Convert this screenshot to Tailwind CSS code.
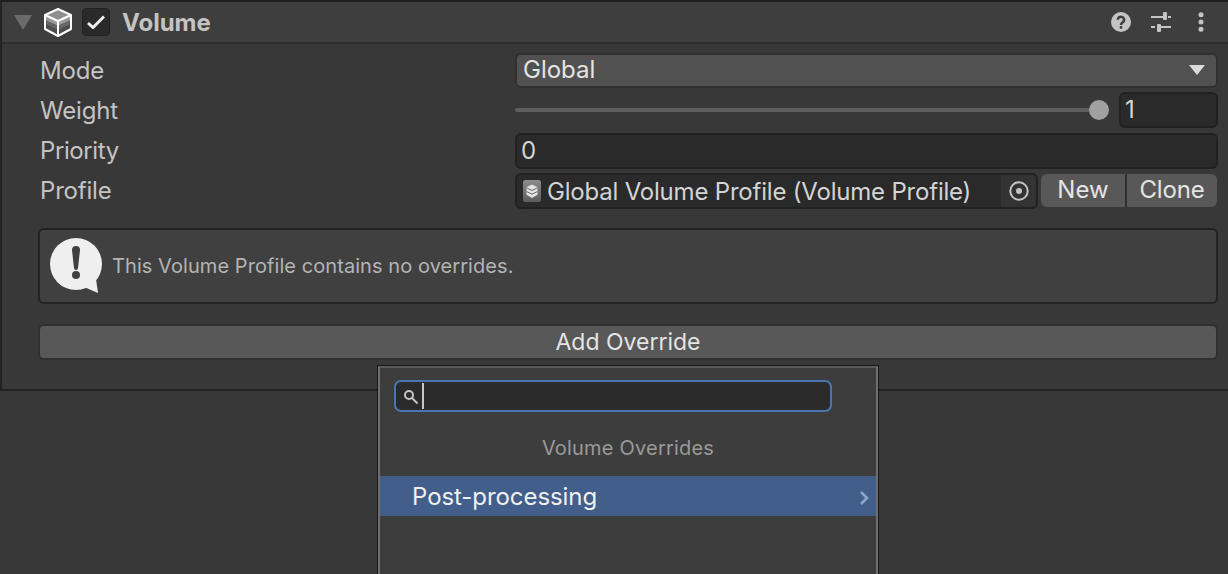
<!DOCTYPE html>
<html lang="en">
<head>
  <meta charset="UTF-8" />
  <title>Volume Inspector</title>
  <script src="https://cdn.jsdelivr.net/npm/@tailwindcss/browser@4"></script>
</head>
<body class="relative w-[1228px] h-[574px] overflow-hidden bg-[#383838] font-['Inter',sans-serif] text-[24px] leading-none text-[#c4c4c4]">

  <!-- Component -->
  <section class="h-[391px] border-l-2 border-b-2 border-t-2 border-[#232323] border-t-[#1f1f1f]">
    <!-- Header -->
    <header class="h-[42px] flex items-center bg-[#3e3e3e] border-b-2 border-[#2f2f2f] pl-[12px] pr-[24px]">
      <svg width="18" height="15" viewBox="0 0 18 15" class="shrink-0"><path d="M0 0h18L9 15z" fill="#6b6b6b"/></svg>
      <svg width="30" height="30" viewBox="0 0 30 30" class="ml-[11px] shrink-0">
        <path d="M15 2l13 6-13 6L2 8z" fill="#8e8e8e"/>
        <path d="M2 8l13 6 13-6v5l-13 6-13-6z" fill="#9a9a9a"/>
        <path d="M2 13l13 6 13-6v4l-13 6-13-6z" fill="#666666"/>
        <path d="M2 17l13 6 13-6v5l-13 7-13-7z" fill="#4d4d4d"/>
        <path d="M15 2l13 6v14l-13 7-13-7V8zM2 8l13 6 13-6M15 14v15" fill="none" stroke="#fff" stroke-width="2" stroke-linejoin="round"/>
      </svg>
      <div class="ml-[9px] w-[28px] h-[28px] shrink-0 rounded-[4px] bg-[#2a2a2a] border border-[#212121] flex items-center justify-center">
        <svg width="18" height="14" viewBox="0 0 18 14"><path d="M1 8l5 4.500L17 1.500" fill="none" stroke="#eee" stroke-width="3"/></svg>
      </div>
      <span class="ml-[12px] pt-[2px] font-bold text-[#c4c4c4]">Volume</span>
      <div class="ml-auto flex items-center">
        <svg width="20" height="20" viewBox="0 0 22 22">
          <circle cx="11" cy="11" r="11" fill="#c4c4c4"/>
          <path d="M7.500 8.500a3.500 3.300 0 1 1 5.500 2.700c-1.300.9-2 1.300-2 3" fill="none" stroke="#3e3e3e" stroke-width="2.800"/>
          <rect x="9.600" y="15.500" width="2.800" height="2.800" fill="#3e3e3e"/>
        </svg>
        <svg width="20" height="20" viewBox="0 0 20 20" class="ml-[20px]" fill="#c4c4c4">
          <rect x="0" y="4" width="12" height="2"/><rect x="12" y="0" width="4" height="8" rx="1"/><rect x="17" y="4" width="3" height="2"/>
          <rect x="0" y="14" width="4" height="2"/><rect x="6" y="12" width="4" height="8" rx="1"/><rect x="10" y="14" width="10" height="2"/>
        </svg>
        <svg width="6" height="20" viewBox="0 0 6 20" class="ml-[27px]" fill="#c4c4c4">
          <circle cx="3" cy="2.700" r="2.500"/><circle cx="3" cy="10" r="2.500"/><circle cx="3" cy="17.300" r="2.500"/>
        </svg>
      </div>
    </header>

    <!-- Fields -->
    <div class="pl-[38px] pr-[10px] pt-[7px]">
      <div class="h-[40px] flex items-center">
        <span class="w-[475px] tracking-[-0.2px]">Mode</span>
        <div class="flex-1 h-[35px] mb-[2px] flex items-center justify-between rounded-[6px] bg-[#515151] border-2 border-[#303030] pl-[6px] pr-[11px] text-[#e4e4e4]">
          <span>Global</span>
          <svg width="16" height="10" viewBox="0 0 16 10"><path d="M0 0h16L8 10z" fill="#dcdcdc"/></svg>
        </div>
      </div>
      <div class="h-[40px] flex items-center">
        <span class="w-[475px] tracking-[-0.2px]">Weight</span>
        <div class="flex-1 flex items-center mb-[2px]">
          <div class="relative flex-1 h-[4px] bg-[#5e5e5e] rounded-full mr-[10px]">
            <div class="absolute right-0 top-[-8px] w-[20px] h-[20px] rounded-full bg-[#a0a0a0]"></div>
          </div>
          <div class="w-[99px] h-[36px] flex items-center rounded-[6px] bg-[#2a2a2a] border-2 border-[#212121] pl-[4px] text-[#d4d4d4]">1</div>
        </div>
      </div>
      <div class="h-[40px] flex items-center">
        <span class="w-[475px] tracking-[-0.4px]">Priority</span>
        <div class="flex-1 h-[36px] flex items-center rounded-[6px] bg-[#2a2a2a] border-2 border-[#212121] pl-[4px] text-[#d4d4d4]">0</div>
      </div>
      <div class="h-[40px] flex items-center">
        <span class="w-[475px] tracking-[-0.2px]">Profile</span>
        <div class="flex-1 flex items-center">
          <div class="w-[523px] h-[36px] flex items-center rounded-[6px] bg-[#2a2a2a] border-2 border-[#212121] pl-[6px] overflow-hidden text-[#d4d4d4]">
            <svg width="18" height="22" viewBox="0 0 18 22" class="shrink-0">
              <defs><linearGradient id="asset" x1="0" y1="0" x2="0" y2="1"><stop offset="0" stop-color="#8c8c8c"/><stop offset="1" stop-color="#5c5c5c"/></linearGradient></defs>
              <rect width="18" height="22" rx="2.500" fill="url(#asset)"/>
              <path d="M9 4.500l5.500 2.800v7.400L9 18l-5.500-3.300V7.300z" fill="#e4e4e4"/>
              <path d="M3.500 7.800L9 10.500l5.500-2.700M3.500 11.500L9 14.200l5.500-2.700" fill="none" stroke="#666" stroke-width="1"/>
            </svg>
            <span class="ml-[6px] pt-[2px] whitespace-nowrap tracking-[-0.2px]">Global Volume Profile (Volume Profile)</span>
            <div class="ml-auto w-[35px] h-full shrink-0 bg-[#333333] flex items-center justify-center">
              <svg width="20" height="20" viewBox="0 0 20 20"><circle cx="10" cy="10" r="8.700" fill="none" stroke="#c4c4c4" stroke-width="2"/><circle cx="10" cy="10" r="3" fill="#c4c4c4"/></svg>
            </div>
          </div>
          <div class="ml-[3px] mr-[1px] mb-[2px] flex-1 h-[33px] flex rounded-[6px] bg-[#585858] overflow-hidden text-[#e4e4e4]">
            <div class="w-[86px] pb-[1px] flex items-center justify-center border-r-2 border-[#2f2f2f]">New</div>
            <div class="flex-1 pb-[1px] flex items-center justify-center tracking-[-0.2px]">Clone</div>
          </div>
        </div>
      </div>

      <!-- Help box -->
      <div class="mt-[17px] -ml-[2px] h-[76px] flex items-center rounded-[6px] bg-[#404040] border-2 border-[#232323] pl-[10px] text-[20px] tracking-[0.07px] text-[#b4b4b4]">
        <svg width="54" height="58" viewBox="0 0 54 58" class="mt-[2px] shrink-0">
          <circle cx="26" cy="26" r="26" fill="#efefef"/>
          <path d="M34 49l12-8 2 14z" fill="#efefef"/>
          <path d="M22 12a4 4 0 0 1 8 0l-2 18a2 2 0 0 1-4 0z" fill="#404040"/>
          <circle cx="26" cy="37" r="4" fill="#404040"/>
        </svg>
        <span class="ml-[8px]">This Volume Profile contains no overrides.</span>
      </div>

      <!-- Add Override -->
      <div class="mt-[20px] -ml-[2px] h-[36px] flex items-center justify-center rounded-[6px] bg-[#585858] border-2 border-[#303030] text-[23px] text-[#e4e4e4]">Add Override</div>
    </div>
  </section>

  <!-- Add Override popup -->
  <div class="absolute left-[377px] top-[365px] w-[502px] h-[220px] border border-[#191919] bg-[#3e3e3e]">
    <div class="h-full border-2 border-[#6f6f6f] border-t-[#5a5a5a] bg-[#3d3d3d]">
      <div class="ml-[14px] mt-[12px] w-[438px] h-[32px] flex items-center rounded-[7px] border-2 border-[#4a76b0] bg-[#2a2a2a]">
        <svg width="16" height="16" viewBox="0 0 16 16" class="ml-[7px] mt-[1px]"><circle cx="6" cy="6" r="4" fill="none" stroke="#c4c4c4" stroke-width="2"/><path d="M9 9l5.500 5.500" stroke="#c4c4c4" stroke-width="2"/></svg>
        <div class="ml-[3px] w-[2px] h-[26px] bg-[#c8c8c8]"></div>
      </div>
      <div class="mt-[26px] text-center text-[20px] tracking-[0.2px] text-[#9a9a9a]">Volume Overrides</div>
      <div class="mt-[18px] h-[40px] flex items-center justify-between bg-[#425e8a] pl-[32px] pr-[7px] text-[#f0f0f0]">
        <span class="pt-[2px] tracking-[-0.07px]">Post-processing</span>
        <svg width="10" height="14" viewBox="0 0 10 14" class="mt-[4px]"><path d="M2 1l6 6-6 6" fill="none" stroke="#93a6c6" stroke-width="2.500"/></svg>
      </div>
    </div>
  </div>
</body>
</html>
